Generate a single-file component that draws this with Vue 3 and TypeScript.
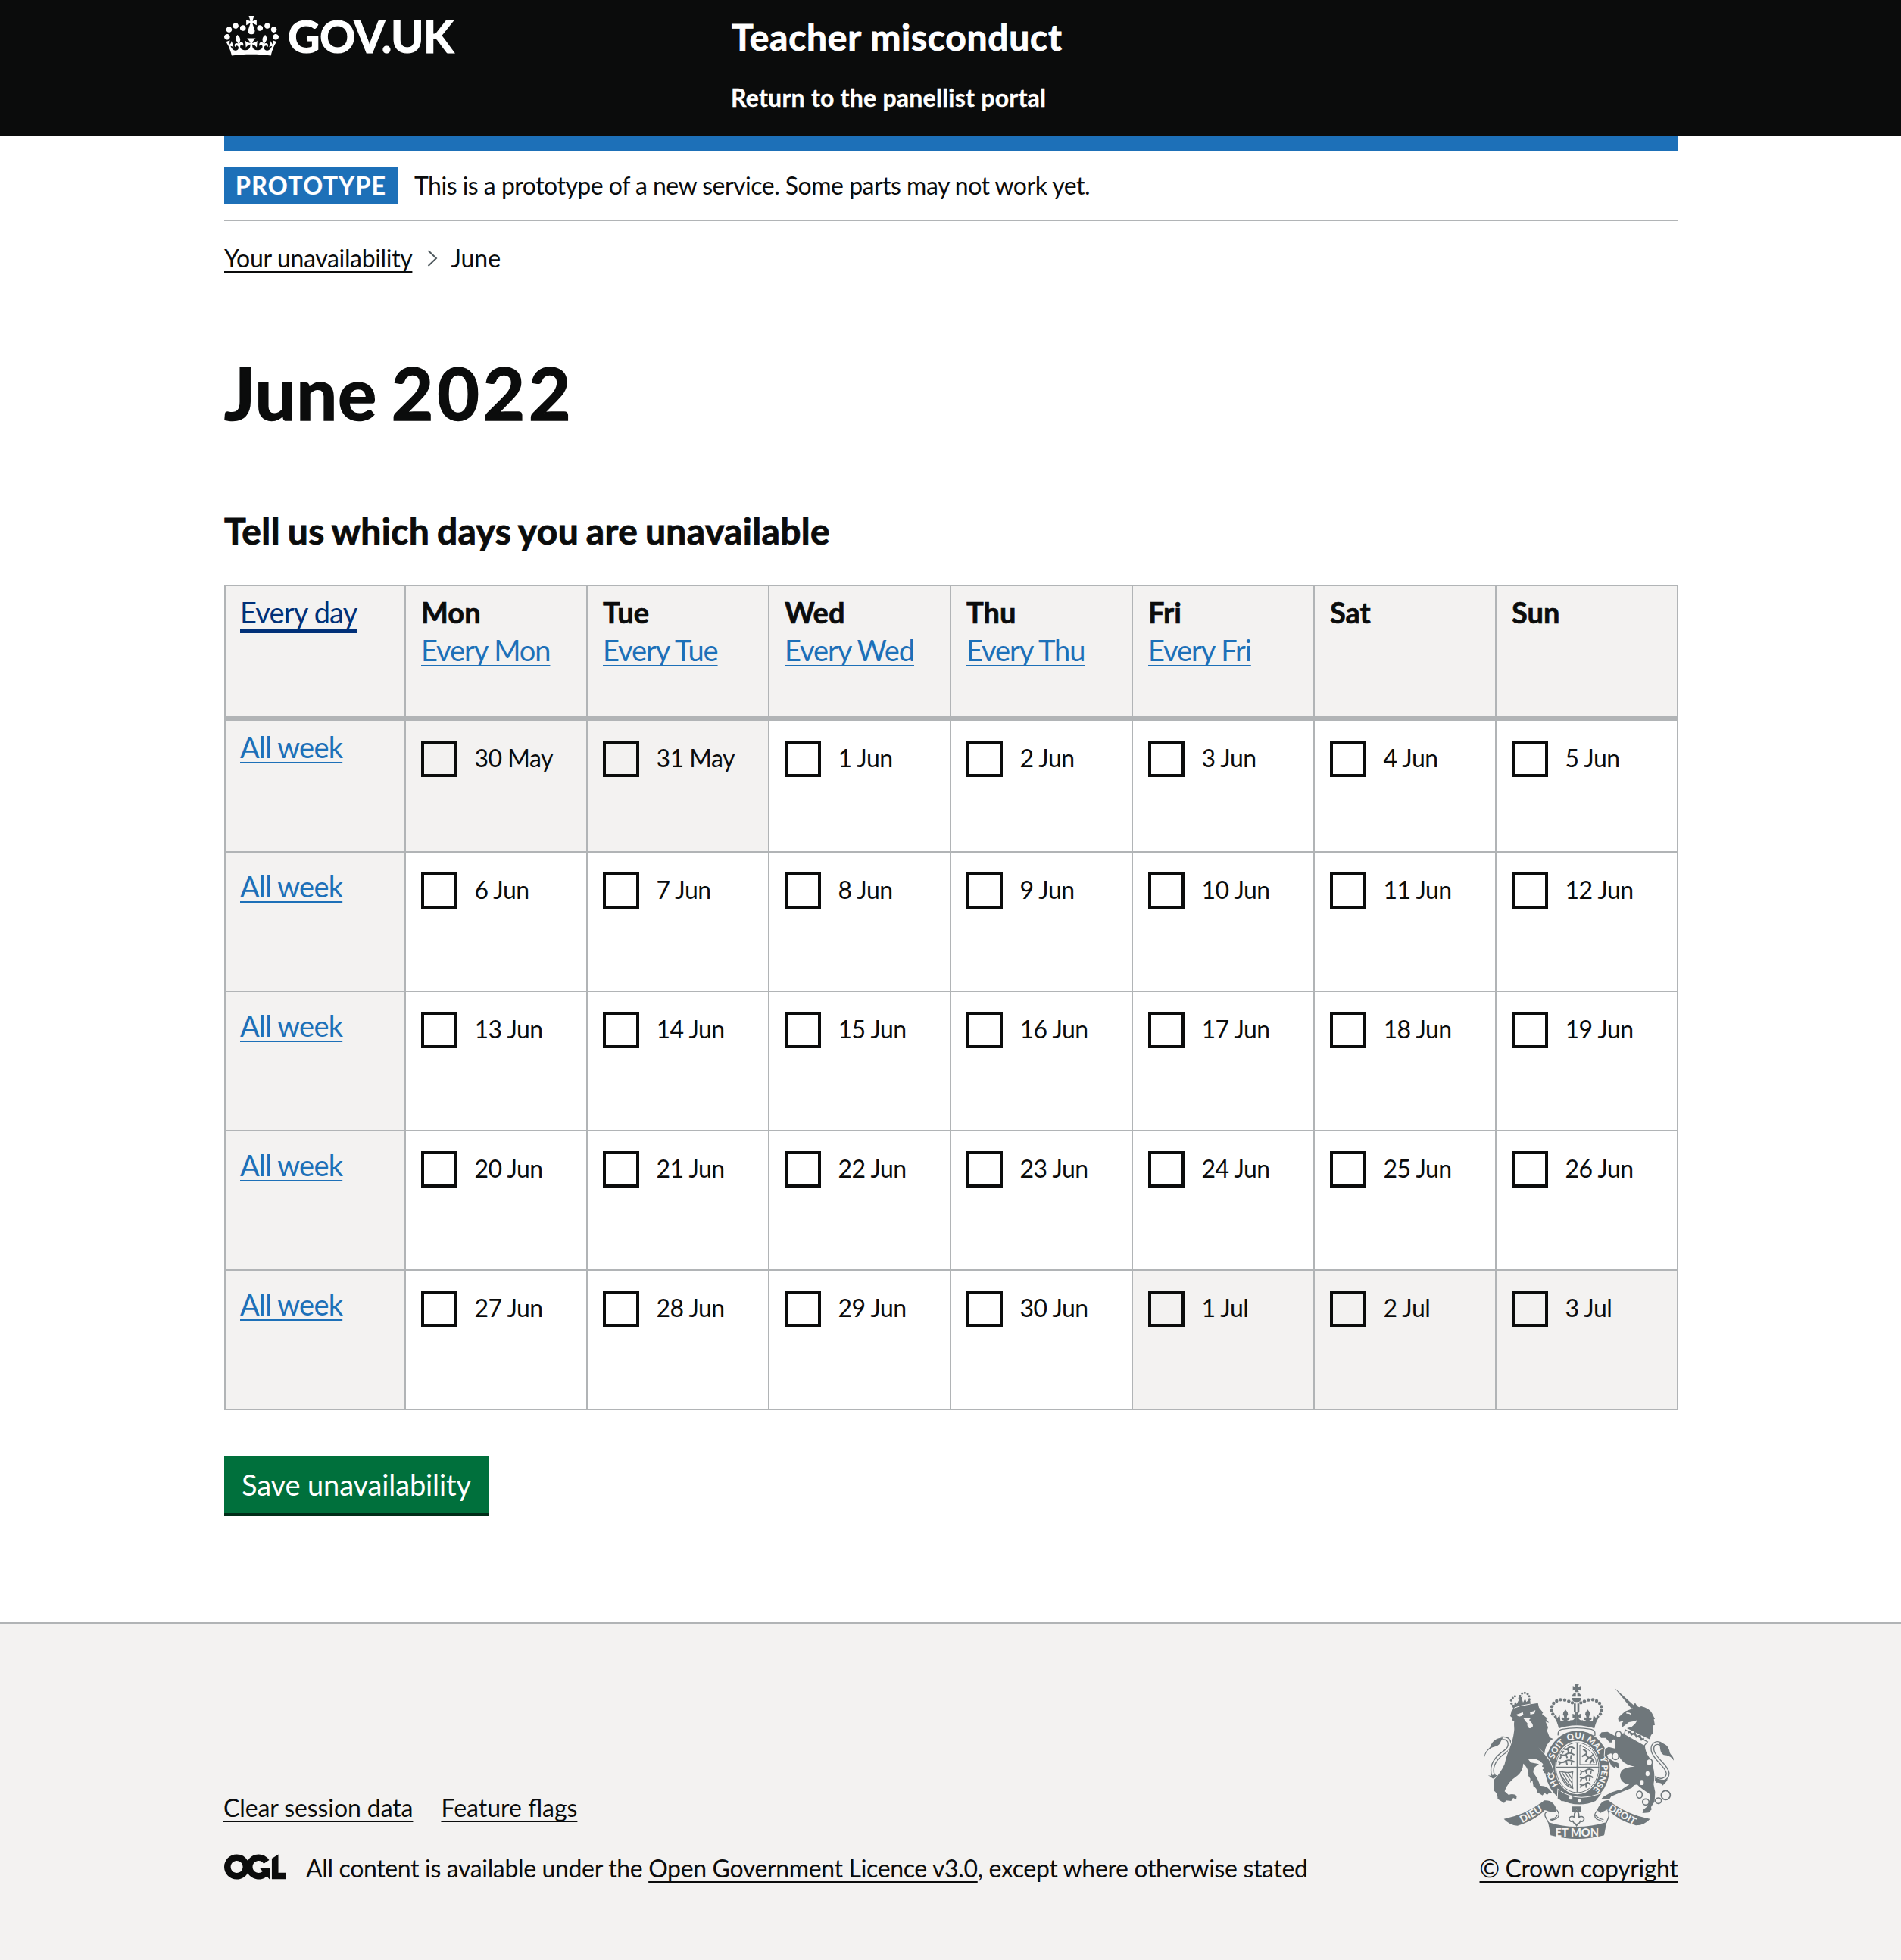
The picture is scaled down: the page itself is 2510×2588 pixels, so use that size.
<script setup lang="ts">
interface Day {
  label: string
  outside: boolean
}

interface Weekday {
  name: string
  link?: string
}

const weekdays: Weekday[] = [
  { name: 'Mon', link: 'Every Mon' },
  { name: 'Tue', link: 'Every Tue' },
  { name: 'Wed', link: 'Every Wed' },
  { name: 'Thu', link: 'Every Thu' },
  { name: 'Fri', link: 'Every Fri' },
  { name: 'Sat' },
  { name: 'Sun' },
]

const monthNames = ['May', 'Jun', 'Jul']
const monthLengths = [31, 30, 31]

function buildWeeks(): Day[][] {
  const weeks: Day[][] = []
  let month = 0
  let date = 30
  for (let w = 0; w < 5; w++) {
    const week: Day[] = []
    for (let d = 0; d < 7; d++) {
      week.push({ label: `${date} ${monthNames[month]}`, outside: month !== 1 })
      date++
      if (date > monthLengths[month]) {
        date = 1
        month++
      }
    }
    weeks.push(week)
  }
  return weeks
}

const weeks = buildWeeks()

// Pearls on the left half of the St Edward's crown; the right half mirrors them
const pearls: [number, number][] = [
  [408, 145], [394, 139], [378, 134], [361, 133], [346, 138], [334, 147], [327, 160], [326, 175], [331, 190],
]
const lionPearls: [number, number][] = [
  [167, 148], [166, 136], [172, 126], [181, 119], [209, 108], [220, 106], [231, 110], [237, 119], [238, 131],
]
</script>

<template>
  <div class="page">
    <header class="header">
      <div class="container header-inner">
        <div class="brand">
          <svg class="crown" viewBox="0 0 132 97" width="72" height="53" aria-hidden="true">
            <path fill="currentColor" fill-rule="evenodd" d="M25 30.2c3.5 1.5 7.7-.2 9.1-3.7 1.5-3.6-.2-7.8-3.9-9.2-3.6-1.4-7.6.3-9.1 3.9-1.4 3.5.3 7.5 3.9 9zM9 39.5c3.6 1.5 7.8-.2 9.2-3.7 1.5-3.6-.2-7.8-3.9-9.1-3.6-1.5-7.6.2-9.1 3.8-1.4 3.5.3 7.5 3.8 9zM4.4 57.2c3.5 1.5 7.7-.2 9.1-3.8 1.5-3.6-.2-7.7-3.9-9.1-3.5-1.5-7.6.3-9.1 3.8-1.4 3.5.3 7.6 3.9 9.1zm38.3-21.4c3.5 1.5 7.7-.2 9.1-3.8 1.5-3.6-.2-7.7-3.9-9.1-3.6-1.5-7.6.3-9.1 3.8-1.3 3.6.4 7.7 3.9 9.1zm64.4-5.6c-3.6 1.5-7.8-.2-9.1-3.7-1.5-3.6.2-7.8 3.8-9.2 3.6-1.4 7.7.3 9.2 3.9 1.3 3.5-.4 7.5-3.9 9zm15.9 9.3c-3.6 1.5-7.7-.2-9.1-3.7-1.5-3.6.2-7.8 3.7-9.1 3.6-1.5 7.7.2 9.2 3.8 1.5 3.5-.3 7.5-3.8 9zm4.7 17.7c-3.6 1.5-7.8-.2-9.2-3.8-1.5-3.6.2-7.7 3.9-9.1 3.6-1.5 7.7.3 9.2 3.8 1.3 3.5-.4 7.6-3.9 9.1zM89.3 35.8c-3.6 1.5-7.8-.2-9.2-3.8-1.4-3.6.2-7.7 3.9-9.1 3.6-1.5 7.7.3 9.2 3.8 1.4 3.6-.3 7.7-3.9 9.1zM69.7 17.7l8.9 4.7V9.3l-8.9 2.8c-.2-.3-.5-.6-.9-.9L72.4 0H59.6l3.5 11.2c-.3.3-.6.5-.9.9l-8.8-2.8v13.1l8.8-4.7c.3.3.6.7.9.9l-5 15.4v.1c-.2.8-.4 1.6-.4 2.4 0 4.1 3.1 7.5 7 8.1h.2c.3 0 .7.1 1 .1.4 0 .7 0 1-.1h.2c4-.6 7.1-4.1 7.1-8.1 0-.8-.1-1.7-.4-2.4V34l-5.1-15.4c.4-.2.7-.6 1-.9zM66 92.8c16.9 0 32.8 1.1 47.1 3.2 4-16.9 8.9-26.7 14-33.5l-9.6-3.4c1 4.9 1.1 7.2 0 10.2-1.5-1.4-3-4.3-4.2-8.7L108.6 76c2.8-2 5-3.2 7.5-3.3-4.4 9.4-10 11.9-13.6 11.2-4.3-.8-6.3-4.6-5.6-7.9 1-4.7 5.7-5.9 8-.5 4.3-8.7-3-11.4-7.6-8.8 7.1-7.2 7.9-13.5 2.1-21.1-8 6.1-8.1 12.3-4.5 20.8-4.7-5.4-12.1-2.5-9.5 6.2 3.4-5.2 7.9-2 7.2 3.1-.6 4.3-6.4 7.8-13.5 7.2-10.3-.9-10.9-8-11.2-13.8 2.5-.5 7.1 1.8 11 7.3L80.2 60c-4.1 4.4-8 5.3-12.3 5.4 1.4-4.4 8-11.6 8-11.6H55.5s6.4 7.2 7.9 11.6c-4.2-.1-8-1-12.3-5.4l1.4 16.4c3.9-5.5 8.5-7.7 10.9-7.3-.3 5.8-.9 12.8-11.1 13.8-7.2.6-12.9-2.9-13.5-7.2-.7-5 3.8-8.3 7.1-3.1 2.7-8.7-4.6-11.6-9.4-6.2 3.7-8.5 3.6-14.7-4.6-20.8-5.8 7.6-5 13.9 2.2 21.1-4.7-2.6-11.9.1-7.7 8.8 2.3-5.5 7.1-4.2 8.1.5.7 3.3-1.3 7.1-5.7 7.9-3.5.7-9-1.8-13.5-11.2 2.5.1 4.7 1.3 7.5 3.3l-4.7-15.4c-1.2 4.4-2.7 7.2-4.3 8.7-1.1-3-.9-5.3 0-10.2l-9.5 3.4c5 6.9 9.9 16.7 14 33.5 14.8-2.1 30.8-3.2 47.7-3.2z" />
          </svg>
          <span class="wordmark">GOV.UK</span>
        </div>
        <div class="service">
          <div class="service-name">Teacher misconduct</div>
          <div class="service-link">Return to the panellist portal</div>
        </div>
      </div>
    </header>

    <div class="container">
      <div class="blue-bar"></div>
      <div class="phase">
        <strong class="tag">PROTOTYPE</strong>
        <span class="phase-text">This is a prototype of a new service. Some parts may not work yet.</span>
      </div>
      <nav class="crumbs">
        <a class="link dark crumb" href="#">Your unavailability</a>
        <svg class="chevron" width="14" height="22" viewBox="0 0 14 22" aria-hidden="true">
          <path d="M1.5 1L12 11 1.5 21" fill="none" stroke="#505a5f" stroke-width="2" />
        </svg>
        <span>June</span>
      </nav>

      <main>
        <h1>June <span class="year">2022</span></h1>
        <h2>Tell us which days you are unavailable</h2>

        <div class="calendar">
          <div class="row head">
            <div class="cell side"><a class="link every-day" href="#">Every day</a></div>
            <div v-for="day in weekdays" :key="day.name" class="cell">
              <div class="day-name">{{ day.name }}</div>
              <a v-if="day.link" class="link every" href="#">{{ day.link }}</a>
            </div>
          </div>
          <div v-for="(week, i) in weeks" :key="i" class="row" :class="{ first: i === 0 }">
            <div class="cell side"><a class="link all-week" href="#">All week</a></div>
            <div v-for="day in week" :key="day.label" class="cell date" :class="{ outside: day.outside }">
              <span class="box"></span>
              <span class="label">{{ day.label }}</span>
            </div>
          </div>
        </div>

        <button class="save" type="button">Save unavailability</button>
      </main>
    </div>

    <footer class="footer">
      <div class="container footer-inner">
        <div class="meta">
          <div class="meta-links">
            <a class="link dark clear" href="#">Clear session data</a>
            <a class="link dark" href="#">Feature flags</a>
          </div>
          <div class="licence">
            <svg class="ogl" viewBox="0 0 483.2 195.7" width="82" height="34" aria-label="OGL">
              <path fill="currentColor" d="M421.5 142.8V.1l-50.7 32.3v161.1h112.4v-50.7zm-122.3-9.6A47.12 47.12 0 0 1 221 97.8c0-26 21.1-47.1 47.1-47.1 16.7 0 31.4 8.7 39.7 21.8l42.7-27.2A97.63 97.63 0 0 0 268.1 0c-36.5 0-68.3 20.1-85.1 49.7A98 98 0 0 0 97.8 0C43.9 0 0 43.9 0 97.8s43.9 97.8 97.8 97.8c36.5 0 68.3-20.1 85.1-49.7a97.76 97.76 0 0 0 149.6 25.4l19.4 22.2h3v-87.8h-80l24.3 27.5zM97.8 145c-26 0-47.1-21.1-47.1-47.1s21.1-47.1 47.1-47.1 47.1 21.1 47.1 47.1S123.8 145 97.8 145" />
            </svg>
            <span class="licence-text">All content is available under the <a class="link dark" href="#">Open Government Licence v3.0</a>, except where otherwise stated</span>
          </div>
        </div>

        <div class="copyright">
          <svg class="crest" viewBox="60 72 750 612" width="250" height="204" aria-hidden="true">
            <!-- crown -->
            <g class="ink">
              <path d="M417 72h17l-4 11 11-4v18l-11-5 4 11h-17l4-11-11 5V79l11 4z" />
              <path d="M407 121a18 16 0 0 1 15-15v15zM428 106a18 16 0 0 1 15 15h-15zM406 126h38q-1 12-12 16h-14q-11-4-12-16z" />
              <path d="M414 148h8v32h-8zM428 148h8v32h-8z" />
              <g v-for="(p, i) in pearls" :key="i">
                <circle :cx="p[0]" :cy="p[1]" r="6.6" />
                <circle :cx="850 - p[0]" :cy="p[1]" r="6.6" />
              </g>
              <path id="crown-half" d="M334 200l10-8 4 14 10-12 3 22q10 4 14-3-10 3-10-6 4-7 11-1 0-10-5-14 0-10 10-20 10 10 10 20-5 4-5 14 7-6 11 1 0 9-10 6 5 7 15 1 10 2 16-8l2-4-11 5v-18l11 4-4-11h9.500V235q-40 1-71 12-6-29-20-47z" />
              <use href="#crown-half" transform="translate(850) scale(-1 1)" />
            </g>
            <path d="M352 274q-3-20 16-24 57-10 115 0 19 4 14 26" class="line" stroke-width="4" />

            <!-- garter -->
            <ellipse cx="428" cy="402" rx="108" ry="126" class="line" stroke-width="40" />
            <defs>
              <path id="motto" d="M428 515C378 515 332 463 332 402S378 288 428 288 524 341 524 402 478 515 428 515z" />
            </defs>
            <g class="motto" font-size="34">
              <text><textPath href="#motto" startOffset="18%">HO</textPath></text>
              <text><textPath href="#motto" startOffset="36%">SOIT</textPath></text>
              <text><textPath href="#motto" startOffset="49%">QUI</textPath></text>
              <text><textPath href="#motto" startOffset="61%">MAL</textPath></text>
              <text><textPath href="#motto" startOffset="70.500%">Y</textPath></text>
              <text><textPath href="#motto" startOffset="81.5%">PENSE</textPath></text>
            </g>

            <!-- quartered shield -->
            <ellipse cx="428" cy="402" rx="86" ry="101" class="paper" />
            <ellipse cx="428" cy="402" rx="85" ry="99" class="line" stroke-width="3" />
            <path d="M428 304v196M342 401h172" class="line" stroke-width="6" />
            <g class="line" stroke-width="6">
              <path d="M372 326q10 8 20-2t26 4M374 336l-6 10M390 330l4 12M406 328l-2 14M360 350q14 8 26-2t30 4M364 358l-6 10M384 352l4 12M404 352l-2 14M352 378q16 8 30-2t34 4M360 384l-6 9M384 378l4 14M406 380l-2 12" />
              <path d="M438 414q14 8 26-2t30 4M444 420l-4 12M462 416l4 12M482 416l-2 12M438 440q14 8 24-2t28 4M444 446l-4 12M462 442l4 12M478 442l-2 12M438 468q12 8 22-2t20 4M444 472l-4 10M462 468l2 14" />
              <path d="M450 330q16 4 14 18t16 14q10 6 14 22M462 348l-16 10M474 362l-14 16M480 360l14-12M486 372l-8 14" />
            </g>
            <path d="M438 312v78h66q0-50-66-78z" class="line" stroke-width="3" />
            <path d="M358 416q30 10 52 2-6 30 0 66-40-10-52-68zM366 420l38 58M378 420l28 42M390 420l16 26M362 432l34 44" class="line" stroke-width="4" />

            <!-- belt -->
            <path d="M352 490Q424 544 524 504L500 534Q430 566 350 524z" class="ink halo" />
            <circle cx="402" cy="522" r="7" class="paper" />
            <circle cx="436" cy="534" r="7" class="paper" />
            <path d="M384 496q-22-14-28 6t10 30q18 2 14-16" class="line" stroke-width="5" />

            <!-- lion -->
            <path d="M128 286c40-6 38 36 14 52-30 20-56 50-50 86 6 26 38 20 58-16" class="line" stroke-width="15" />
            <path d="M128 286c40-6 38 36 14 52-30 20-56 50-50 86 6 26 38 20 58-16" class="gap" stroke-width="7" />
            <path class="ink" d="M60 360c0-22 14-28 24-42 6-20 22-34 52-36-14 10-8 30-32 36-20 4-36 16-44 42zM74 432q14 6 24-4 12 14 38 8-12 14-26 20l6-14q-20 8-30-2z" />
            <path class="ink halo" d="M164 182l8-10 62-20 38-6 4 18 16 20-4 6 22 18-6 2 12 14-14-4 10 22-4 14 10 26 14 6c-24 14-32 36-34 58l-24-24 30 34q24 30 28 62l-8 8-12-6-2 8-12-4-8-14 8-8-10-4 4-10-12-12q-22-14-46-6l10 12 32 6q-26 14-22 34 22 30 26 52 30-2 48 28l-10-2-10 10-10-8-8 10-20-12q-2-18-16-24l-4-24-10 10 2-16-8-12c2-16-4-34-20-48q-2 30-24 48-40 26-50 62l16 14q18-8 32 4l-2 14-12-6-8 12-20-2-8 10-26-16q2-22-16-34l2-42q26-26 42-62c10-50 34-80 38-138 0-12-2-20 0-30l-8-6 2-8-10-8 4-14z" />
            <path class="paper" d="M186 192q14-4 26-10l2 10q-8 10-22 6zM240 180q12 2 22-6l-4 14-16 4zM214 206q16-4 30 0-8 4-6 10 14 10 14 22-4 10-14 8-10-4-8-20-8-6-10-12z" />
            <path class="ink" d="M166 150l12 4 3-16 7 12 9-18-4-6 5-3-3-9h10l-1 9 7-2-3 8 5 15 8-16 5 14 14-12 4 28-68 14z" />
            <circle v-for="(p, i) in lionPearls" :key="'l' + i" :cx="p[0]" :cy="p[1]" r="4.6" class="ink" />
            <path d="M178 166l22-8 42-8" class="gap" stroke-width="3" />

            <!-- unicorn -->
            <path d="M764 312c-24-18-42 0-38 22 6 34 56 58 60 90 0 24-30 36-54 16" class="line" stroke-width="15" />
            <path d="M764 312c-24-18-42 0-38 22 6 34 56 58 60 90 0 24-30 36-54 16" class="gap" stroke-width="7" />
            <path class="ink" d="M752 304c26 0 40 18 42 38 4 12 16 14 16 32-12-18-24-20-40-22-18-10-12-34-18-48zM786 448q-6 14-24 28l2-10q-12-6-24-4l-12-26q30 20 58 12z" />
            <path class="ink" d="M576 87l80 72-14 9z" />
            <path class="ink" d="M589 205l28-26 28-10q2-12 12-24 6 14 16 18l8-4q32 8 42 26l12 24-4 2 4 22-6 2v30q-14 8-12 26L624 246l20-6q16-12 22-26-18 6-34 8l-26 20-2-14 8-12-20 6z" />
            <path d="M622 186q10-2 18 4" class="gap" stroke-width="5" />
            <path class="ink halo" d="M612 272l84 46q0 20 18 46c16 36 24 60 16 104l6 30-2 38-14 22 2 10-12 12-24 2 2-12 14-12q18-28 12-52-34-22-48-36-14-2-22 12-46 18-82 34l-6 10-34 2q6-10 26-20 24-14 54-18l32-22c-32-2-40-28-36-42 6-24 34-26 58-28-36-4-56-24-66-46l-30-6-14 6 4 12 20 12 20 8 4 24-16-12-2 8-14-10-12-26-14-12 2-28 14-8 24 6q4-16 2-24l-22 0-16-18-18 0-8-10 10-12 24-2 28 16q20 6 34-12z" />
            <path d="M618 252l88 48-14 16-78-44z" class="collar" stroke-width="4" />
            <path d="M628 264l10-4 4 12 14-8 6 16 14-6 6 18 10-6" class="line" stroke-width="6" />
            <g class="chain" stroke-width="5">
              <ellipse cx="591" cy="271" rx="11" ry="13" />
              <ellipse cx="579" cy="356" rx="13" ry="14" />
              <ellipse cx="713" cy="381" rx="12" ry="14" />
              <ellipse cx="674" cy="509" rx="11" ry="14" />
              <ellipse cx="699" cy="538" rx="13" ry="12" />
              <ellipse cx="749" cy="533" rx="12" ry="11" />
              <circle cx="778" cy="511" r="18" />
            </g>
            <ellipse cx="706" cy="426" rx="8" ry="10" class="paper" />
            <ellipse cx="683" cy="461" rx="8" ry="10" class="paper" />
            <ellipse cx="572" cy="298" rx="7" ry="8" class="paper" />

            <!-- scrolls -->
            <path class="ink" d="M137 605q88-16 160-73 36-4 50 38-6 12-20 8l-28-8q-40 42-108 62-32-2-54-27zM716 605q-90-16-166-74-30 0-44 40l14 10 28-14q40 44 112 64 36-2 56-26zM312 618q112 36 232 0l-10 52q-106 28-212 0z" />
            <g class="line" stroke-width="4">
              <path d="M327 576q-34-2-26 20l14 26M347 570q18 20-2 34l-26 10M507 572q-20 18-2 34l26 10M548 568q8 20 4 30l-10 24M348 590q-6 14-28 18M500 590q10 14 32 18" />
              <path d="M425 572q-14 14-7 30-6-10-16-6-12 8-2 18 8 4 12-2-2 10 8 12l5 8 5-8q10-2 8-12 4 6 12 2 10-10-2-18-10-4-16 6 7-16-7-30z" stroke-width="5" />
            </g>
            <path class="ink" d="M408 556h36v22l-14-2-5-8-5 8-12 2z" />
            <g class="motto" font-size="40">
              <text transform="translate(251 598) rotate(-30)">DIEU</text>
              <text transform="translate(600 599) rotate(30)" font-size="38">DROIT</text>
              <text x="427" y="675" font-size="44">ET MON</text>
            </g>
          </svg>
          <a class="link dark" href="#">© Crown copyright</a>
        </div>
      </div>
    </footer>
  </div>
</template>

<style>
body {
  margin: 0;
  background: #fff;
}
</style>

<style scoped>
* {
  box-sizing: border-box;
}

.page {
  display: flex;
  flex-direction: column;
  min-height: 2588px;
  font-family: Lato, 'Open Sans', sans-serif;
  font-size: 32px;
  line-height: 39px;
  color: #0b0c0c;
}

.container {
  width: 1920px;
  margin-left: 296px;
}

.header {
  height: 180px;
  background: #0b0c0c;
  color: #fff;
}

.header-inner {
  display: flex;
}

.brand {
  display: flex;
  align-items: flex-start;
  width: 670px;
}

.crown {
  margin-top: 21px;
}

.wordmark {
  margin: 12px 0 0 12px;
  font-size: 58.6px;
  font-weight: 700;
  line-height: 70px;
  letter-spacing: -0.5px;
  -webkit-text-stroke: 1.2px currentColor;
}

.service {
  padding-top: 19px;
  font-weight: 700;
}

.service-name {
  font-size: 48px;
  line-height: 59px;
  letter-spacing: 0.72px;
  -webkit-text-stroke: 0.9px currentColor;
}

.service-link {
  margin: 31px 0 0 -1px;
  letter-spacing: 0.25px;
  -webkit-text-stroke: 0.4px currentColor;
}

.blue-bar {
  height: 20px;
  background: #1d70b8;
}

.phase {
  display: flex;
  height: 92px;
  padding-top: 20px;
  border-bottom: 2px solid #b1b4b6;
  line-height: 49px;
}

.tag {
  width: 230px;
  height: 50px;
  padding-left: 15px;
  background: #1d70b8;
  color: #fff;
  font-weight: 700;
  letter-spacing: 1.4px;
  -webkit-text-stroke: 0.3px currentColor;
}

.phase-text {
  margin-left: 21px;
  letter-spacing: -0.51px;
}

.crumbs {
  display: flex;
  padding-top: 29px;
}

.crumb {
  letter-spacing: -0.34px;
}

.chevron {
  margin: 9px 17px 0 20px;
}

.link {
  color: #1d70b8;
  text-decoration: underline;
  text-decoration-thickness: 2px;
  text-underline-offset: 5px;
  text-decoration-skip-ink: none;
}

.link.dark {
  color: #0b0c0c;
}

h1 {
  margin: 100px 0 0;
  font-size: 96px;
  line-height: 115px;
  font-weight: 700;
  letter-spacing: 0.6px;
  -webkit-text-stroke: 1.6px currentColor;
}

.year {
  margin-left: -5px;
  letter-spacing: 4.7px;
}

h2 {
  margin: 97px 0 0;
  font-size: 48px;
  line-height: 57px;
  font-weight: 700;
  letter-spacing: 0.35px;
  word-spacing: -2.2px;
  -webkit-text-stroke: 0.9px currentColor;
}

.calendar {
  margin-top: 43px;
  border-top: 2px solid #b1b4b6;
}

.row {
  display: grid;
  grid-template-columns: repeat(8, 240px);
  height: 184px;
  border-bottom: 2px solid #b1b4b6;
}

.row.first {
  height: 174px;
}

.row.head {
  height: 178px;
  border-bottom-width: 6px;
}

.cell {
  padding: 19px 0 0 20px;
  border-right: 2px solid #b1b4b6;
  font-size: 38px;
  line-height: 50px;
}

.first .cell,
.head .cell {
  padding-top: 9px;
}

.cell.side {
  padding-left: 19px;
  border-left: 2px solid #b1b4b6;
}

.head .cell,
.cell.side,
.cell.outside {
  background: #f3f2f1;
}

.every-day {
  color: #003078;
  letter-spacing: -0.8px;
  text-decoration-thickness: 6px;
  text-underline-offset: 7px;
}

.day-name {
  font-weight: 700;
  -webkit-text-stroke: 0.7px currentColor;
}

.every {
  letter-spacing: -1.05px;
}

.all-week {
  letter-spacing: -0.8px;
}

.row .cell.date {
  display: flex;
  align-items: flex-start;
  padding-top: 26px;
}

.box {
  width: 48px;
  height: 48px;
  border: 4px solid #0b0c0c;
}

.label {
  margin-left: 22.5px;
  font-size: 32px;
  line-height: 46px;
  letter-spacing: -0.5px;
}

.save {
  display: block;
  width: 350px;
  height: 76px;
  margin-top: 60px;
  padding: 15px 0 15px 23px;
  border: 0;
  background: #00703c;
  box-shadow: 0 4px 0 #002d18;
  color: #fff;
  font: 400 38px/46px Lato, sans-serif;
  letter-spacing: -0.13px;
  text-align: left;
}

.footer {
  flex: 1;
  margin-top: 144px;
  border-top: 2px solid #b1b4b6;
  background: #f3f2f1;
}

.footer-inner {
  display: flex;
  justify-content: space-between;
  padding-top: 80px;
}

.meta {
  padding-top: 143px;
  margin-left: -1px;
}

.meta-links {
  display: flex;
  gap: 37px;
}

.clear {
  letter-spacing: -0.1px;
}

.licence {
  display: flex;
  margin-top: 41px;
}

.ogl {
  margin: 1px 0 0 1px;
}

.licence-text {
  margin-left: 26px;
  letter-spacing: -0.35px;
}

.copyright {
  display: flex;
  flex-direction: column;
  align-items: center;
  width: 263px;
  letter-spacing: -0.38px;
}

.crest {
  margin-bottom: 19px;
}

.ink {
  fill: #6f777b;
}

.paper {
  fill: #f3f2f1;
}

.halo {
  stroke: #f3f2f1;
  stroke-width: 6px;
  paint-order: stroke;
}

.line {
  fill: none;
  stroke: #6f777b;
}

.gap {
  fill: none;
  stroke: #f3f2f1;
}

.collar,
.chain {
  fill: #f3f2f1;
  stroke: #6f777b;
}

.motto {
  fill: #f3f2f1;
  font-family: Lato, sans-serif;
  font-weight: 900;
  letter-spacing: 0;
  text-anchor: middle;
}
</style>
